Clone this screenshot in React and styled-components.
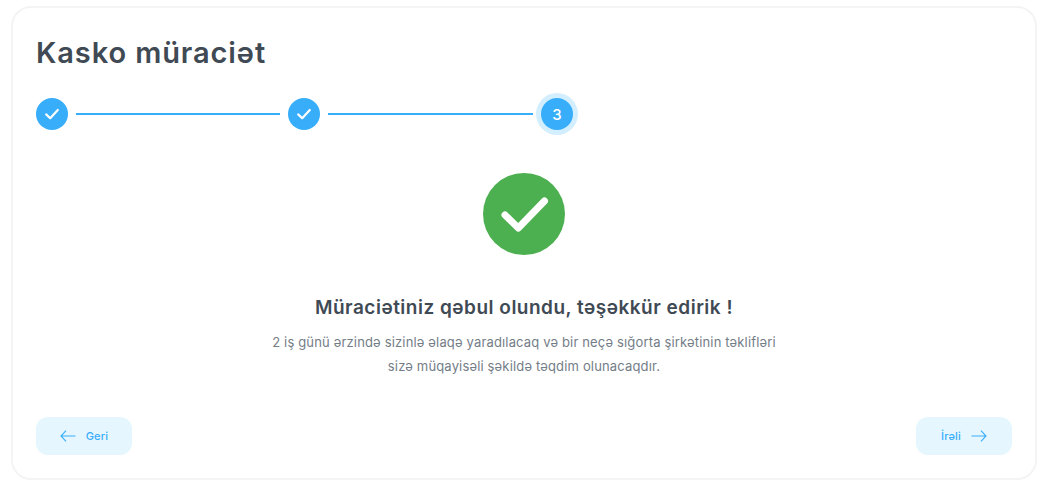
import React from 'react';
import styled, { createGlobalStyle } from 'styled-components';

const Global = createGlobalStyle`
  html, body { margin: 0; padding: 0; background: #fff; }
  body { font-family: "Inter", "Liberation Sans", sans-serif; }
`;

const Page = styled.div`
  padding: 6px 9px 7px 11px;
`;

const Card = styled.section`
  box-sizing: border-box;
  height: 474px;
  border: 2px solid #f4f4f4;
  border-radius: 20px;
  padding: 26px 23px 23px 23px;
  display: flex;
  flex-direction: column;
`;

const Title = styled.h1`
  margin: 0;
  height: 38px;
  line-height: 38px;
  font-size: 29px;
  font-weight: 600;
  letter-spacing: 0.9px;
  color: #3f4a54;
`;

const Stepper = styled.div`
  display: flex;
  align-items: center;
  gap: 8px;
  height: 32px;
  margin-top: 26px;
`;

const Dot = styled.div`
  flex: none;
  box-sizing: border-box;
  width: 32px;
  height: 32px;
  border-radius: 50%;
  background: #38aefb;
  color: #fff;
  display: flex;
  align-items: center;
  justify-content: center;
  font-size: 15px;
  font-weight: 500;
  box-shadow: ${(p) => (p.$active ? '0 0 0 5px #d3eefe' : 'none')};
`;

const Line = styled.div`
  flex: none;
  width: ${(p) => p.$width}px;
  height: 2px;
  background: #38aefb;
`;

const Body = styled.div`
  flex: 1;
  display: flex;
  flex-direction: column;
  align-items: center;
  padding-top: 43px;
`;

const Success = styled.div`
  width: 82px;
  height: 82px;
  border-radius: 50%;
  background: #4caf50;
  display: flex;
  align-items: center;
  justify-content: center;
`;

const Heading = styled.h2`
  margin: 41px 0 0;
  line-height: 24px;
  font-size: 19px;
  font-weight: 600;
  letter-spacing: 0.5px;
  color: #3f4a54;
`;

const Note = styled.p`
  margin: 10px 0 0;
  width: 540px;
  text-align: center;
  font-size: 13px;
  line-height: 24px;
  letter-spacing: 0.16px;
  color: #737d87;
`;

const Footer = styled.div`
  display: flex;
  justify-content: space-between;
`;

const NavButton = styled.button`
  width: 96px;
  height: 38px;
  border: 0;
  border-radius: 12px;
  background: #e6f6fe;
  color: #38aefb;
  font-family: inherit;
  font-size: 11px;
  font-weight: 500;
  letter-spacing: 0.2px;
  display: flex;
  align-items: center;
  justify-content: center;
  gap: 10px;
  padding: 0;
`;

const SmallCheck = () => (
  <svg width="18" height="18" viewBox="0 0 18 18" fill="none">
    <path d="M3.2 9.4 L7.2 13.2 L14.8 5" stroke="#fff" strokeWidth="2.2" strokeLinecap="round" strokeLinejoin="round" />
  </svg>
);

const BigCheck = () => (
  <svg width="50" height="40" viewBox="0 0 50 40" fill="none">
    <path d="M6 21 L19.3 34 L45.5 7" stroke="#fff" strokeWidth="7" strokeLinecap="round" strokeLinejoin="round" />
  </svg>
);

const Arrow = ({ back }) => (
  <svg width="16" height="12" viewBox="0 0 16 12" fill="none">
    {back ? (
      <path d="M15.5 6 H1 M6 0.7 L1 6 L6 11.3" stroke="#38aefb" strokeWidth="1.1" />
    ) : (
      <path d="M0.5 6 H15 M10 0.7 L15 6 L10 11.3" stroke="#38aefb" strokeWidth="1.1" />
    )}
  </svg>
);

export default function App() {
  return (
    <>
      <Global />
      <Page>
        <Card>
          <Title>Kasko müraciət</Title>
          <Stepper>
            <Dot><SmallCheck /></Dot>
            <Line $width={204} />
            <Dot><SmallCheck /></Dot>
            <Line $width={205} />
            <Dot $active>3</Dot>
          </Stepper>
          <Body>
            <Success><BigCheck /></Success>
            <Heading>Müraciətiniz qəbul olundu, təşəkkür edirik !</Heading>
            <Note>
              2 iş günü ərzində sizinlə əlaqə yaradılacaq və bir neçə sığorta şirkətinin təklifləri
              <br />
              sizə müqayisəli şəkildə təqdim olunacaqdır.
            </Note>
          </Body>
          <Footer>
            <NavButton><Arrow back />Geri</NavButton>
            <NavButton>İrəli<Arrow /></NavButton>
          </Footer>
        </Card>
      </Page>
    </>
  );
}
